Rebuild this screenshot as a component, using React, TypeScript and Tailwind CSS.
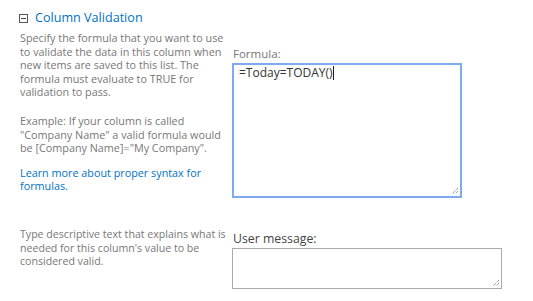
export default function App() {
  const font = { fontFamily: '"Open Sans", "Noto Sans", sans-serif' };
  return (
    <main
      className="w-[533px] h-[301px] bg-white overflow-hidden pl-[19px] pt-[9px] text-[#777777]"
      style={font}
    >
      {/* section 1: formula */}
      <div className="flex">
        <div className="w-[213px] whitespace-nowrap">
          <div className="flex items-center h-[18px]">
            <span className="flex items-center justify-center w-[9px] h-[9px] border border-[#555555] mr-[7px]">
              <span className="block w-[5px] h-px bg-[#444444]" />
            </span>
            <span className="text-[12.6px] text-[#0072c6] leading-[18px]">Column Validation</span>
          </div>
          <p className="mt-[4px] pl-px text-[10.8px] leading-[13.6px]">
            Specify the formula that you want to use
            <br />
            to validate the data in this column when
            <br />
            new items are saved to this list. The
            <br />
            formula must evaluate to TRUE for
            <br />
            validation to pass.
          </p>
          <p className="mt-[15px] pl-px text-[10.8px] leading-[13.6px]">
            Example: If your column is called
            <br />
            "Company Name" a valid formula would
            <br />
            be [Company Name]="My Company".
          </p>
          <p className="mt-[11px] pl-px text-[10.8px] leading-[13.6px] text-[#0072c6]">
            Learn more about proper syntax for
            <br />
            formulas.
          </p>
        </div>
        <div className="pt-[38px]">
          <div className="text-[11.5px] leading-[14px] pl-[1px] mb-[2px]">Formula:</div>
          <div className="relative w-[230px] h-[135px] border-2 border-[#7eaaf0] pl-[5px] text-[12px] leading-[16px] text-[#333333]">
            <span>=Today=TODAY()</span>
            <span className="inline-block w-px h-[14px] bg-[#222222] align-middle -mt-[2px]" />
            <Grip />
          </div>
        </div>
      </div>

      {/* section 2: user message */}
      <div className="flex mt-[30px]">
        <div className="w-[213px] whitespace-nowrap">
          <p className="pl-px text-[10.6px] leading-[13.6px]">
            Type descriptive text that explains what is
            <br />
            needed for this column's value to be
            <br />
            considered valid.
          </p>
        </div>
        <div className="pt-[3px]">
          <div className="text-[12.3px] leading-[16px] text-[#444444] pl-[1px] mb-[1px]">User message:</div>
          <div className="relative w-[270px] h-[41px] border border-[#ababab]">
            <Grip />
          </div>
        </div>
      </div>
    </main>
  );
}

function Grip() {
  return (
    <svg className="absolute right-[1px] bottom-[1px]" width="9" height="9" viewBox="0 0 9 9">
      <path d="M8 2 L2 8 M8 5 L5 8" stroke="#666666" strokeWidth="1" strokeDasharray="1 1" />
    </svg>
  );
}
